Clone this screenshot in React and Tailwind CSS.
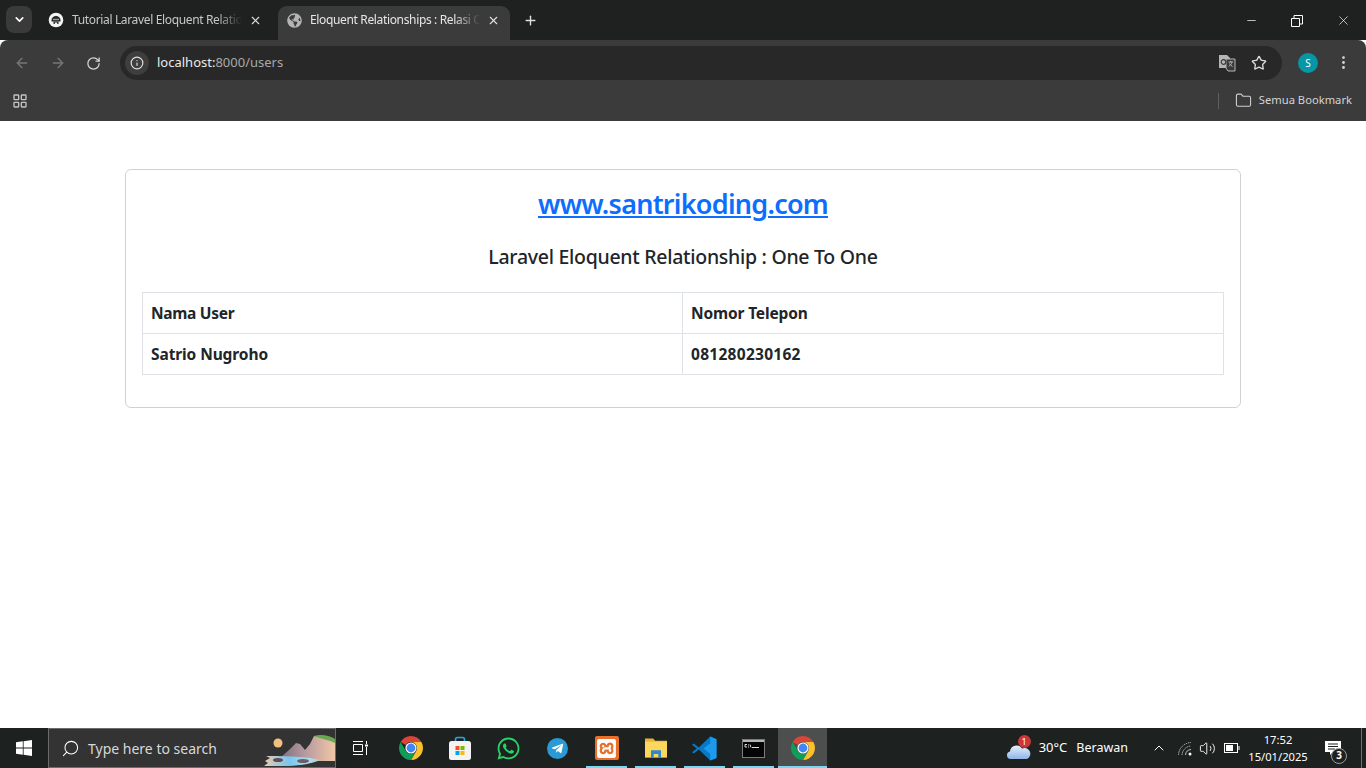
import React from 'react';
import { ArrowLeft, ArrowRight, RotateCw, Info, Star, X, Plus, ChevronDown, ChevronUp, Search, Minus, EllipsisVertical, LayoutGrid, Folder, Volume2 } from 'lucide-react';
import { FaGlobeAmericas, FaWhatsapp, FaTelegramPlane } from 'react-icons/fa';
import { SiXampp } from 'react-icons/si';

const ui = { fontFamily: '"Noto Sans", "Open Sans", sans-serif' };

const ChromeLogo = () => (
  <svg width="24" height="24" viewBox="0 0 24 24">
    <path fill="#db4437" d="M12 0a12 12 0 0 1 10.39 6H12a6 6 0 0 0-5.2 3L1.61 6A12 12 0 0 1 12 0z" />
    <path fill="#fbc02d" d="M22.39 6A12 12 0 0 1 12 24l5.2-9A6 6 0 0 0 12 6z" />
    <path fill="#0f9d58" d="M12 24A12 12 0 0 1 1.61 6L6.8 15a6 6 0 0 0 10.4 0z" />
    <circle cx="12" cy="12" r="5.6" fill="#fff" />
    <circle cx="12" cy="12" r="4.4" fill="#4285f4" />
  </svg>
);

const WindowsLogo = () => (
  <svg width="16" height="16" viewBox="0 0 16 16" fill="#fff">
    <path d="M0 2.300 6.800 1.300V7.600H0zM7.600 1.200 16 0V7.600H7.600zM0 8.400H6.800V14.700L0 13.700zM7.600 8.400H16V16L7.600 14.800z" />
  </svg>
);

const StoreIcon = () => (
  <svg width="24" height="24" viewBox="0 0 24 24">
    <path d="M7.500 6V3.500A2 2 0 0 1 9.500 1.500h5a2 2 0 0 1 2 2V6" fill="none" stroke="#29a8e0" strokeWidth="1.600" />
    <rect x="1" y="5" width="22" height="19" rx="2.500" fill="#f3f3f3" />
    <rect x="7.500" y="10" width="4" height="4" fill="#f25022" />
    <rect x="12.500" y="10" width="4" height="4" fill="#7fba00" />
    <rect x="7.500" y="15" width="4" height="4" fill="#00a4ef" />
    <rect x="12.500" y="15" width="4" height="4" fill="#ffb900" />
  </svg>
);

const FolderIcon = () => (
  <svg width="22" height="22" viewBox="0 0 24 24">
    <path d="M0 1.500h9l2 2.500h13v3H0z" fill="#e8b23c" />
    <rect y="5" width="24" height="17.500" fill="#fbd85c" />
    <path d="M6.500 22.500v-8h11v8h-3v-4h-5v4z" fill="#2f88cf" />
  </svg>
);

const VsCodeIcon = () => (
  <svg width="25" height="25" viewBox="0 0 24 24">
    <path d="M17.500 0.500 23.500 3v18l-6 2.500L6.500 13 1.800 16.700 0 15.600 4.500 12 0 8.400l1.800-1.100L6.500 11z" fill="#0a78c4" />
    <path d="M17.500 0.500 23.500 3v18l-6 2.500V17L11 12l6.500-5z" fill="#1c9bec" />
  </svg>
);

const CmdIcon = () => (
  <svg width="23" height="19" viewBox="0 0 23 19">
    <rect x="0.500" y="0.500" width="22" height="18" fill="#050505" stroke="#7d7d7d" />
    <rect x="1" y="1" width="21" height="2" fill="#b5b5b5" />
    <path d="M3 5.500h2M3 8h2M3 5.500V8M6.500 5.500v1M6.500 7.500v1M8 5.500l1 3M10 8.500h7" stroke="#ddd" strokeWidth="1" fill="none" />
  </svg>
);

const SearchArt = () => (
  <svg width="72" height="36" viewBox="0 0 72 36">
    <defs>
      <linearGradient id="cliff" x1="0" y1="0" x2="1" y2="0">
        <stop offset="0" stopColor="#7f6f80" />
        <stop offset="0.45" stopColor="#b79aa0" />
        <stop offset="1" stopColor="#f0c6a6" />
      </linearGradient>
      <linearGradient id="water" x1="0" y1="0" x2="1" y2="0">
        <stop offset="0" stopColor="#eccbb0" />
        <stop offset="0.45" stopColor="#79c6ef" />
        <stop offset="0.8" stopColor="#a9dcf0" />
        <stop offset="1" stopColor="#cfc4b8" />
      </linearGradient>
    </defs>
    <circle cx="15" cy="13" r="4.500" fill="#f0c27d" />
    <path d="M18 27 26 20 33 13 37 14 42 20 47 14 51 6 72 9V31H18z" fill="url(#cliff)" />
    <path d="M51 6C57 4 66 5 72 9V13C66 10 58 9 51 6z" fill="#6aa84f" />
    <path d="M3 26 7 28 2 31 5 33 1 36H26C42 35 50 33 57 30 46 27 30 26 3 26z" fill="url(#water)" />
    <ellipse cx="15" cy="30" rx="5" ry="2" fill="#5d4e5a" />
    <ellipse cx="40" cy="31" rx="6" ry="2" fill="#6d5d68" />
  </svg>
);

const WeatherIcon = () => (
  <svg width="26" height="22" viewBox="0 0 26 22">
    <defs>
      <linearGradient id="cloud" x1="0" y1="0" x2="0" y2="1">
        <stop offset="0" stopColor="#e8f1fb" />
        <stop offset="1" stopColor="#8db6e8" />
      </linearGradient>
    </defs>
    <path d="M4.500 22a3.800 3.800 0 0 1-.5-7.500A6.500 6.500 0 0 1 16 11.500a5.300 5.300 0 0 1 5 10.500z" fill="url(#cloud)" />
  </svg>
);

const WifiIcon = () => (
  <svg width="16" height="16" viewBox="0 0 16 16" fill="none" stroke="#bdbdbd" strokeWidth="1">
    <path d="M1.500 15A13 13 0 0 1 14 2.500" strokeDasharray="1.500 .8" />
    <path d="M5 15a9.500 9.500 0 0 1 9-9" strokeDasharray="1.500 .8" />
    <path d="M8.500 15A6 6 0 0 1 14 9.500" />
    <circle cx="13" cy="14" r="1.500" fill="#fff" stroke="none" />
  </svg>
);

const TranslateIcon = () => (
  <svg width="18" height="18" viewBox="0 0 18 18">
    <path d="M1 1h8l3 3v10H1z" fill="#b5b5b5" />
    <path d="M8 5h9v12H10l-2-3z" fill="#3a3a3a" stroke="#b5b5b5" />
    <circle cx="5.500" cy="8" r="2.300" fill="none" stroke="#3a3a3a" strokeWidth="1.200" />
    <path d="M10.500 8h4.500M12.700 7v1M14 8c-.6 2.200-2 3.600-3.300 4.300M11.500 9.500c.7 1.200 1.600 2.200 3 3" fill="none" stroke="#b5b5b5" />
  </svg>
);

const SkullFavicon = () => (
  <svg width="16" height="16" viewBox="0 0 16 16">
    <circle cx="8" cy="8" r="7.300" fill="#f4f4f4" />
    <path d="M3.500 8a4.500 4 0 0 1 9 0v1.500h-9z" fill="#23282a" />
    <rect x="5" y="6.800" width="6" height="1.400" fill="#9a9a9a" />
    <path d="M5.500 9.500h5V12h-5z" fill="#23282a" />
    <path d="M6.800 10.500h2.400V12H6.800z" fill="#f4f4f4" />
  </svg>
);

const Tab = ({ active, icon, title }) => (
  <div className={`flex h-[34px] w-[232px] shrink-0 items-center px-[8px] pb-[6px] ${active ? 'rounded-t-[9px] bg-[#3b3b3b] text-[#e6e6e6]' : 'text-[#c7c7c7]'}`}>
    <span className="flex w-[16px] shrink-0 items-center justify-center">{icon}</span>
    <span className="ml-[8px] w-[170px] overflow-hidden whitespace-nowrap text-[12px] tracking-[-0.35px] [mask-image:linear-gradient(to_right,black_85%,transparent)]">{title}</span>
    <X size={13} strokeWidth={2} className="ml-[7px] shrink-0 text-[#e0e0e0]" />
  </div>
);

const TaskIcon = ({ children, running, active }) => (
  <div className={`relative flex h-full w-[49px] items-center justify-center ${active ? 'bg-[#4d4f4e]' : ''}`}>
    {children}
    {running && <span className={`absolute bottom-0 h-[2px] bg-[#76d8f5] ${active ? 'inset-x-0' : 'inset-x-[4px]'}`} />}
  </div>
);

const App = () => {
  return (
    <div className="flex h-screen w-full flex-col overflow-hidden bg-white" style={ui}>
      {/* Tab strip */}
      <div className="flex h-[40px] shrink-0 items-end bg-[#1f2120]">
        <div className="mb-[7px] ml-[6px] flex h-[27px] w-[26px] items-center justify-center rounded-[8px] bg-[#3a3a3a] text-white">
          <ChevronDown size={13} strokeWidth={3} />
        </div>
        <div className="ml-[8px] flex gap-[6px]">
          <Tab icon={<SkullFavicon />} title="Tutorial Laravel Eloquent Relationships" />
          <Tab active icon={<FaGlobeAmericas size={15} color="#b4b4b4" />} title="Eloquent Relationships : Relasi One To One" />
        </div>
        <Plus size={15} strokeWidth={2.200} className="mb-[12px] ml-[13px] text-[#dedede]" />
        <div className="mb-[12px] ml-auto flex items-center text-white">
          <span className="flex w-[46px] justify-center"><Minus size={13} strokeWidth={1.300} /></span>
          <span className="flex w-[46px] justify-center">
            <svg width="12" height="12" viewBox="0 0 12 12" fill="none" stroke="#fff"><path d="M.5 3.500h8v8h-8zM3 3.500V.5h8.500V9H8.500" /></svg>
          </span>
          <span className="flex w-[46px] justify-center"><X size={15} strokeWidth={1.100} /></span>
        </div>
      </div>

      {/* Address bar and bookmarks */}
      <div className="flex h-[81px] shrink-0 flex-col rounded-t-[8px] bg-[#3b3b3b]">
        <div className="flex h-[40px] items-end">
          <div className="mb-[9px] flex w-[120px] items-center pl-[14px] text-[#777]">
            <ArrowLeft size={16} />
            <ArrowRight size={16} className="ml-[20px]" />
            <RotateCw size={15} strokeWidth={2} className="ml-[20px] text-[#d6d6d6]" />
          </div>
          <div className="flex h-[34px] w-[1162px] items-center rounded-full bg-[#282828]">
            <span className="ml-[5px] flex h-[24px] w-[24px] items-center justify-center rounded-full bg-[#3e3e3e]"><Info size={14} color="#e0e0e0" /></span>
            <span className="ml-[8px] text-[13px] text-[#a8a8a8]"><span className="text-[#ececec]">localhost:</span>8000/users</span>
            <div className="ml-auto flex items-center pr-[15px]">
              <TranslateIcon />
              <Star size={16} color="#dcdcdc" className="ml-[15px]" />
            </div>
          </div>
          <div className="mb-[7px] ml-[16px] flex h-[20px] w-[20px] items-center justify-center rounded-full bg-[#0796a5] text-[10px] text-white">S</div>
          <EllipsisVertical size={17} color="#d6d6d6" className="mb-[9px] ml-[17px]" />
        </div>
        <div className="flex flex-1 items-center pl-[12px] pr-[14px]">
          <LayoutGrid size={16} color="#c4c4c4" />
          <span className="ml-auto h-[16px] w-px bg-[#5f5f5f]" />
          <Folder size={17} strokeWidth={1.500} color="#d0d0d0" className="ml-[16px]" />
          <span className="ml-[7px] text-[11.200px] text-[#d4d4d4]">Semua Bookmark</span>
        </div>
      </div>

      {/* Page */}
      <main className="flex-1 bg-white pt-[48px]">
        <div className="mx-auto w-[1116px] rounded-[6px] border border-[#d0d1d2] px-[16px] pb-[32px] pt-[14px] text-[#212529]">
          <h3 className="text-center text-[27px] font-semibold leading-[40px] tracking-[-0.75px]">
            <a href="#" className="text-[#0d6efd] underline">www.santrikoding.com</a>
          </h3>
          <h5 className="mt-[21px] text-center text-[19.500px] font-medium leading-[24px] tracking-[-0.28px]">Laravel Eloquent Relationship : One To One</h5>
          <table className="mt-[23px] w-full table-fixed border-collapse text-[15.500px] font-bold">
            <tbody>
              <tr className="h-[41px]">
                <td className="w-[540px] border border-[#dee2e6] px-[8px] pt-[2px] tracking-[-0.3px]">Nama User</td>
                <td className="border border-[#dee2e6] px-[8px] pt-[2px] tracking-[-0.15px]">Nomor Telepon</td>
              </tr>
              <tr className="h-[41px]">
                <td className="border border-[#dee2e6] px-[8px] pt-[2px] tracking-[-0.1px]">Satrio Nugroho</td>
                <td className="border border-[#dee2e6] px-[8px] pt-[2px] tracking-[0.28px]">081280230162</td>
              </tr>
            </tbody>
          </table>
        </div>
      </main>

      {/* Taskbar */}
      <footer className="flex h-[40px] shrink-0 items-center bg-[#1d2120] text-white">
        <div className="flex h-full w-[48px] items-center justify-center"><WindowsLogo /></div>
        <div className="flex h-full w-[288px] items-center overflow-hidden border border-[#6b6b6b] bg-[#333333] pl-[12px]">
          <Search size={19} strokeWidth={1.300} className="-scale-x-100" />
          <span className="ml-[8px] text-[14px] text-[#d8d8d8]">Type here to search</span>
          <span className="ml-auto flex"><SearchArt /></span>
        </div>
        <div className="flex h-full w-[50px] items-center justify-center pr-[2px]">
          <svg width="16" height="16" viewBox="0 0 16 16" fill="none" stroke="#fff"><path d="M1 1.500h10M1 14.500h10M1.500 4.500h9v7h-9zM14.500 1v3M14.500 7v8" /><rect x="13" y="4.500" width="3" height="2" fill="#fff" stroke="none" /></svg>
        </div>
        <TaskIcon><ChromeLogo /></TaskIcon>
        <TaskIcon><StoreIcon /></TaskIcon>
        <TaskIcon><FaWhatsapp size={25} color="#25d366" /></TaskIcon>
        <TaskIcon>
          <span className="flex h-[21px] w-[21px] items-center justify-center rounded-full bg-[#2a9ad6]"><FaTelegramPlane size={13} color="#fff" /></span>
        </TaskIcon>
        <TaskIcon running>
          <span className="flex h-[24px] w-[24px] items-center justify-center rounded-[2px] bg-[#e8702a]"><SiXampp size={19} color="#fff" /></span>
        </TaskIcon>
        <TaskIcon running><FolderIcon /></TaskIcon>
        <TaskIcon running><VsCodeIcon /></TaskIcon>
        <TaskIcon running><CmdIcon /></TaskIcon>
        <TaskIcon running active><ChromeLogo /></TaskIcon>

        <div className="ml-auto flex h-full items-center">
          <div className="relative flex w-[26px] justify-center">
            <WeatherIcon />
            <span className="absolute -top-[2px] right-[1px] flex h-[13px] w-[13px] items-center justify-center rounded-full bg-[#d13438] text-[9px]">1</span>
          </div>
          <span className="ml-[7px] text-[13px]">30°C</span>
          <span className="ml-[9px] text-[12.500px]">Berawan</span>
          <ChevronUp size={16} strokeWidth={1.500} className="ml-[23px]" />
          <span className="ml-[10px] flex"><WifiIcon /></span>
          <Volume2 size={17} strokeWidth={1.300} className="ml-[6px]" />
          <svg width="16" height="10" viewBox="0 0 16 10" className="ml-[8px]" fill="none" stroke="#fff"><rect x=".5" y=".5" width="13" height="9" /><rect x="2" y="2" width="7" height="6" fill="#fff" stroke="none" /><path d="M15 3v4" /></svg>
          <div className="ml-[1px] flex w-[74px] flex-col items-center text-[11.200px] leading-[17px]">
            <span>17:52</span>
            <span>15/01/2025</span>
          </div>
          <div className="relative ml-[6px] flex w-[24px] justify-center">
            <svg width="16" height="15" viewBox="0 0 16 15"><path d="M0 0h16v11H8l-3 3v-3H0z" fill="#fff" /><path d="M3 3h10M3 5.500h10M3 8h7" stroke="#1d2120" /></svg>
            <span className="absolute -bottom-[8px] -right-[2px] flex h-[16px] w-[16px] items-center justify-center rounded-full border border-[#9a9a9a] bg-[#1d2120] text-[10px] font-bold">3</span>
          </div>
          <div className="ml-[16px] mr-[4px] h-full w-px bg-[#6f6f6f]" />
        </div>
      </footer>
    </div>
  );
};

export default App;
